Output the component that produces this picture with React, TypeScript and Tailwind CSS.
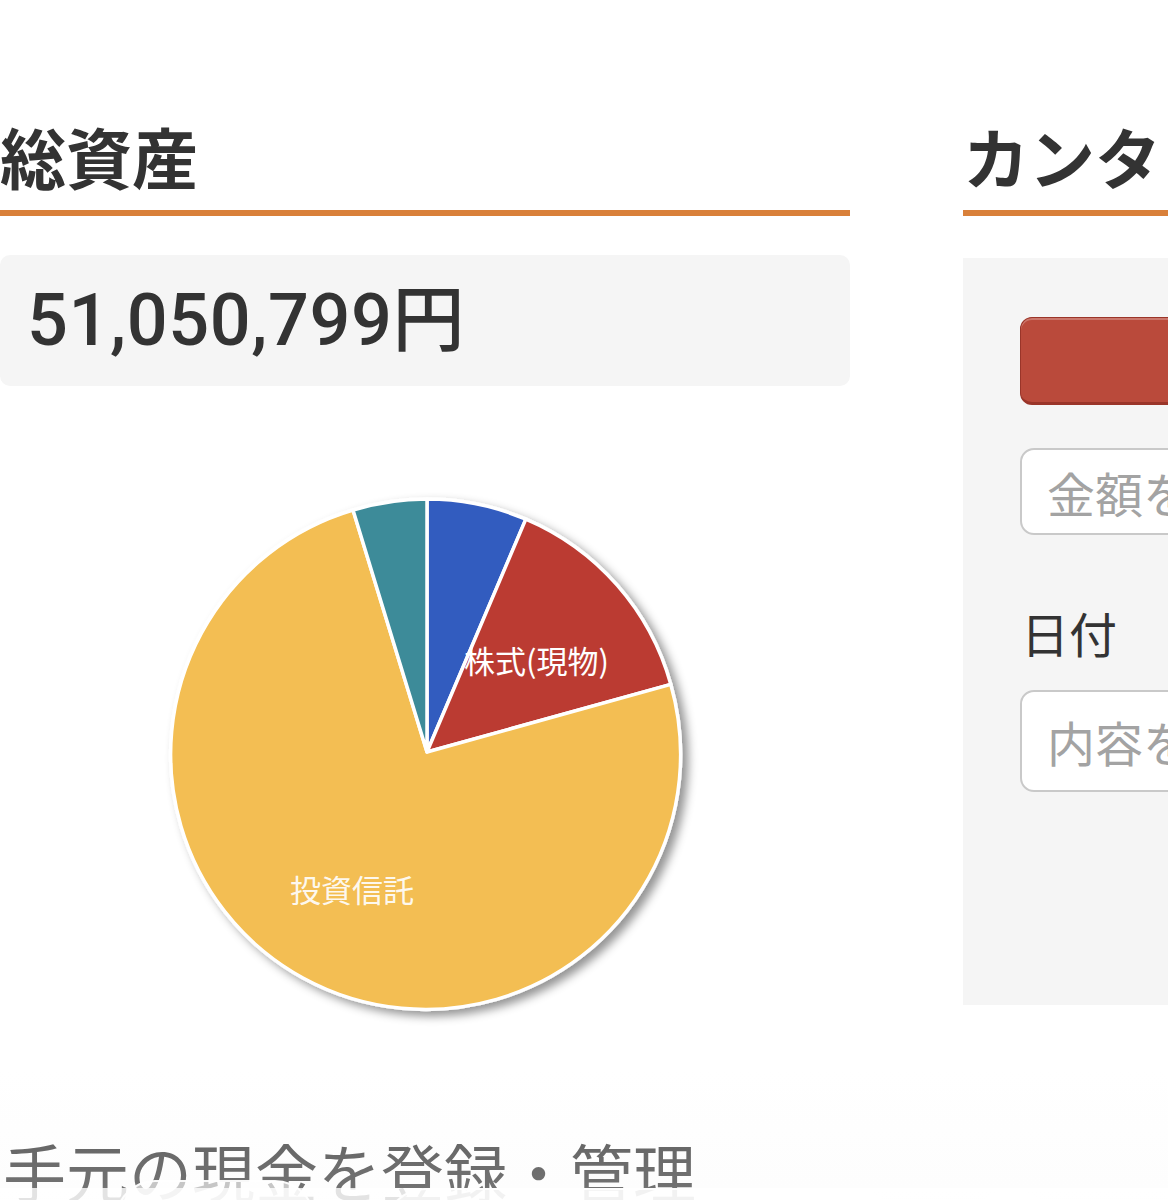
import React from "react";

const font = { fontFamily: '"Noto Sans CJK JP", "Noto Sans", sans-serif' };
const numFont = { fontFamily: 'Roboto, "Noto Sans CJK JP", sans-serif' };

function Pie() {
  return (
    <svg width="600" height="600" viewBox="0 0 600 600" className="block">
      <defs>
        <filter id="sh" x="-20%" y="-20%" width="140%" height="140%">
          <feDropShadow dx="6" dy="5" stdDeviation="5" floodColor="#000" floodOpacity="0.42" />
        </filter>
      </defs>
      <g filter="url(#sh)" stroke="#ffffff" strokeWidth="3.5" strokeLinejoin="round">
        <path d="M300 300 L300 47 A253 253 0 0 1 398.85 67.11 Z" fill="#335bbf" />
        <path d="M300 300 L398.85 67.11 A253 253 0 0 1 543.8 232.4 Z" fill="#bb3a33" />
        <path d="M300 300 L543.8 232.4 A255 255 0 1 1 226.0 58.05 Z" fill="#f3be52" />
        <path d="M300 300 L226.0 58.05 A253 253 0 0 1 300 47 Z" fill="#3d8b99" />
      </g>
      <text x="337" y="221" fill="#ffffff" fontSize="31" style={font}>
        株式(現物)
      </text>
      <text x="163" y="450" fill="#ffffff" fillOpacity="0.92" fontSize="31" style={font}>
        投資信託
      </text>
    </svg>
  );
}

export default function App() {
  return (
    <div className="relative w-[1168px] h-[1200px] overflow-hidden bg-white" style={font}>
      <div className="flex gap-[113px] pt-[115px]">
        <div className="w-[850px] shrink-0">
          <h2 className="text-[66px] leading-[80px] font-bold text-[#333333] pb-[15px] border-b-[6px] border-[#d9803a]">
            総資産
          </h2>
          <div className="mt-[39px] h-[131px] rounded-[10px] bg-[#f5f5f5] px-[27px] flex items-center">
            <span className="text-[72px] leading-none font-medium text-[#333333] tracking-[0.6px]" style={numFont}>
              51,050,799円
            </span>
          </div>
          <div className="mt-[66px] ml-[127px]">
            <Pie />
          </div>
          <p className="mt-[80px] ml-[3px] text-[63px] leading-[76px] text-[#555555] whitespace-nowrap">
            手元の現金を登録・管理
          </p>
        </div>
        <div className="w-[600px] shrink-0">
          <h2 className="text-[66px] leading-[80px] font-bold text-[#333333] pb-[15px] border-b-[6px] border-[#d9803a] whitespace-nowrap">
            カンタ
          </h2>
          <div className="mt-[42px] h-[747px] bg-[#f5f5f5] px-[57px] pt-[59px]">
            <div className="h-[88px] rounded-[12px] bg-[#ba4a3b] border border-[#9a3529] border-b-[3px] shadow-[inset_0_2px_0_rgba(255,255,255,0.25)]" />
            <div className="mt-[43px] h-[87px] rounded-[14px] border-2 border-[#c9c9c9] bg-white px-[25px] flex items-center">
              <span className="text-[48px] leading-none text-[#a3a3a3] whitespace-nowrap">金額を</span>
            </div>
            <div className="mt-[67px] ml-[1px] text-[48px] leading-[60px] text-[#333333]">日付</div>
            <div className="mt-[28px] h-[102px] rounded-[14px] border-2 border-[#c9c9c9] bg-white px-[25px] flex items-center">
              <span className="text-[48px] leading-none text-[#a3a3a3] whitespace-nowrap">内容を</span>
            </div>
          </div>
        </div>
      </div>
      <div className="pointer-events-none absolute left-0 right-0 bottom-0 h-[130px] bg-gradient-to-b from-white/0 to-[#f4f4f4]/20" />
      <div className="pointer-events-none absolute left-0 right-0 bottom-0 h-[12px] bg-white/80" />
      <div className="pointer-events-none absolute left-[115px] top-[1180px] w-[200px] h-[80px] rounded-full border-2 border-white/90 bg-white/60" />
      <div className="pointer-events-none absolute left-[385px] top-[1188px] w-[510px] h-[80px] rounded-[40px] border-2 border-white/90 bg-white/55" />
      <div className="pointer-events-none absolute left-[963px] top-[1190px] w-[98px] h-[98px] rounded-full border-2 border-white/90 bg-white/50" />
    </div>
  );
}
